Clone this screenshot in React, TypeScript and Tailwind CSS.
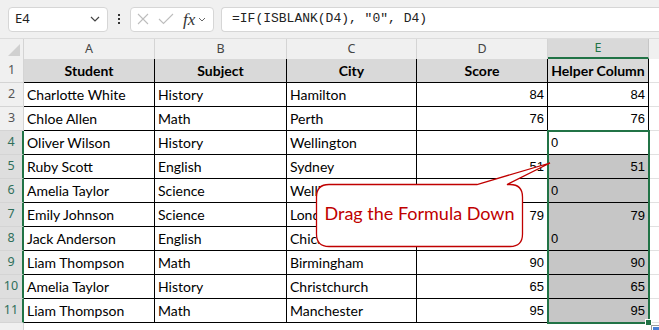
import React from "react";

type Row = [string, string, string, number | null, number | string];

const rows: Row[] = [
  ["Charlotte White", "History", "Hamilton", 84, 84],
  ["Chloe Allen", "Math", "Perth", 76, 76],
  ["Oliver Wilson", "History", "Wellington", null, "0"],
  ["Ruby Scott", "English", "Sydney", 51, 51],
  ["Amelia Taylor", "Science", "Wellington", null, "0"],
  ["Emily Johnson", "Science", "London", 79, 79],
  ["Jack Anderson", "English", "Chicago", null, "0"],
  ["Liam Thompson", "Math", "Birmingham", 90, 90],
  ["Amelia Taylor", "History", "Christchurch", 65, 65],
  ["Liam Thompson", "Math", "Manchester", 95, 95],
];

const headers = ["Student", "Subject", "City", "Score", "Helper Column"];
const letters = ["A", "B", "C", "D", "E"];

const uiFont = "font-['Noto_Sans',sans-serif]";
const cellFont = "font-['Lato',sans-serif]";
const numFont = "font-['Liberation_Sans',Arial,sans-serif]";

function FormulaBar() {
  return (
    <div className="h-[39px] bg-[#f0f0f0] flex items-center border-b border-[#dcdcdc]">
      {/* Name box */}
      <div className="ml-2 w-[100px] h-[25px] bg-white border border-[#d6d6d6] rounded-[4px] flex items-center justify-between pl-[6px] pr-[6px]">
        <span className={`${uiFont} text-[13px] text-[#222]`}>E4</span>
        <svg width="10" height="6" viewBox="0 0 10 6" className="mr-[1px]">
          <path d="M1 1l4 4 4-4" fill="none" stroke="#444" strokeWidth="1.2" />
        </svg>
      </div>
      {/* Vertical dots */}
      <div className="w-[22px] flex flex-col items-center gap-[2px]">
        <div className="w-[2px] h-[2px] bg-[#333]" />
        <div className="w-[2px] h-[2px] bg-[#333]" />
        <div className="w-[2px] h-[2px] bg-[#333]" />
      </div>
      {/* Cancel / enter / fx */}
      <div className="w-[84px] h-[25px] bg-white border border-[#d6d6d6] rounded-[4px] flex items-center pl-[6px]">
        <svg width="12" height="12" viewBox="0 0 12 12">
          <path d="M1 1l10 10M11 1L1 11" stroke="#bdbdbd" strokeWidth="1.1" />
        </svg>
        <svg width="16" height="12" viewBox="0 0 16 12" className="ml-[9px]">
          <path d="M1 6l4.5 4.5L15 1" fill="none" stroke="#bdbdbd" strokeWidth="1.1" />
        </svg>
        <span className="ml-[9px] font-['Liberation_Serif',serif] italic text-[17px] leading-none text-[#333]">fx</span>
        <svg width="8" height="5" viewBox="0 0 8 5" className="ml-[3px]">
          <path d="M1 1l3 3 3-3" fill="none" stroke="#666" strokeWidth="1" />
        </svg>
      </div>
      {/* Formula input */}
      <div className="ml-[7px] flex-1 h-[25px] bg-white border border-r-0 border-[#d6d6d6] rounded-l-[4px] flex items-center pl-[10px]">
        <span className="font-['Liberation_Mono',monospace] text-[13px] text-[#222] whitespace-pre">
          =IF(ISBLANK(D4), "0", D4)
        </span>
      </div>
    </div>
  );
}

export default function App() {
  return (
    <div className="relative w-[659px] h-[330px] overflow-hidden bg-white">
      <FormulaBar />
      <div className="grid grid-cols-[24px_131px_132px_130px_131px_101px_10px] grid-rows-[20px_repeat(11,24px)_8px]">
        {/* Column header row */}
        <div className="bg-[#f0f0f0] border-r border-[#d4d4d4] relative">
          <svg width="14" height="14" viewBox="0 0 14 14" className="absolute right-[2px] bottom-[2px]">
            <path d="M13 1V13H1Z" fill="#d0d0d0" />
          </svg>
        </div>
        {letters.map((l) => (
          <div
            key={l}
            className={`${uiFont} text-[12.5px] flex items-center justify-center ${
              l === "E"
                ? "bg-[#d9d9d9] text-[#217346] border-b-2 border-[#217346] border-r border-r-[#c6c6c6]"
                : "bg-[#f0f0f0] text-[#444] border-r border-[#d4d4d4]"
            }`}
          >
            {l}
          </div>
        ))}
        <div className="bg-[#f0f0f0]" />

        {/* Row 1 - headers */}
        <div className={`${uiFont} bg-[#f0f0f0] text-[12.5px] text-[#555] flex items-center justify-center border-r border-b border-[#d4d4d4]`}>
          1
        </div>
        {headers.map((h) => (
          <div
            key={h}
            className={`${cellFont} bg-[#d9d9d9] font-bold text-[14px] text-black flex items-end justify-center pb-[1px] border-r border-b border-black whitespace-nowrap`}
          >
            {h}
          </div>
        ))}
        <div className="border-b border-[#e1e1e1]" />

        {rows.map((r, i) => {
          const rowNum = i + 2;
          const sel = rowNum >= 4;
          const noBottom = rowNum === 7;
          return (
            <React.Fragment key={rowNum}>
              <div
                className={`${uiFont} text-[12.5px] flex items-center justify-center border-b border-[#d4d4d4] ${
                  sel
                    ? "bg-[#dedede] text-[#2f6f5a] border-r-2 border-r-[#217346]"
                    : "bg-[#f0f0f0] text-[#555] border-r border-r-[#d4d4d4]"
                }`}
              >
                {rowNum}
              </div>
              {[r[0], r[1], r[2]].map((t, j) => (
                <div
                  key={j}
                  className={`${cellFont} text-[14px] text-black flex items-end pb-[1px] pl-[3px] border-r border-b border-black whitespace-nowrap overflow-hidden`}
                >
                  {t}
                </div>
              ))}
              <div
                className={`${numFont} text-[13px] text-black flex items-end justify-end pb-[2px] pr-[3px] border-r border-black ${
                  noBottom ? "" : "border-b"
                }`}
              >
                {r[3] ?? ""}
              </div>
              <div
                className={`${numFont} text-[13px] text-black flex items-end pb-[2px] px-[3px] border-r border-black ${
                  noBottom ? "" : "border-b"
                } ${typeof r[4] === "string" ? "justify-start" : "justify-end"} ${
                  sel && rowNum !== 4 ? "bg-[#c6c6c6]" : "bg-white"
                }`}
              >
                {r[4]}
              </div>
              <div className="border-b border-[#e1e1e1]" />
            </React.Fragment>
          );
        })}

        {/* partial row 12 */}
        <div className="bg-[#f0f0f0] border-r border-[#d4d4d4]" />
        <div className="col-span-6" />
      </div>

      {/* Selection outline E4:E11 */}
      <div className="absolute left-[547px] top-[130px] w-[103px] h-[194px] border-2 border-[#217346] pointer-events-none" />
      <div className="absolute left-[645px] top-[319px] w-[7px] h-[7px] bg-[#217346] border border-white" />
      <div className="absolute left-[651px] top-[325px] w-[12px] h-[10px] bg-white border border-[#9a9a9a] p-[1px]">
        <div className="w-full h-full bg-[#4a7fd6]" />
      </div>

      {/* Callout */}
      <svg className="absolute inset-0 pointer-events-none" width="659" height="330" viewBox="0 0 659 330">
        <path
          d="M329 184.5 H477 L550 163 L507 184.5 H510 Q522.5 184.5 522.5 197 V234 Q522.5 246.5 510 246.5 H329 Q316.5 246.5 316.5 234 V197 Q316.5 184.5 329 184.5 Z"
          fill="white"
          stroke="#c00000"
          strokeWidth="1.3"
        />
      </svg>
      <div className="absolute left-[316px] top-[184px] w-[207px] h-[63px] flex items-center justify-center pb-[4px]">
        <span className={`${cellFont} text-[18px] text-[#c00000] whitespace-nowrap`}>Drag the Formula Down</span>
      </div>
    </div>
  );
}
